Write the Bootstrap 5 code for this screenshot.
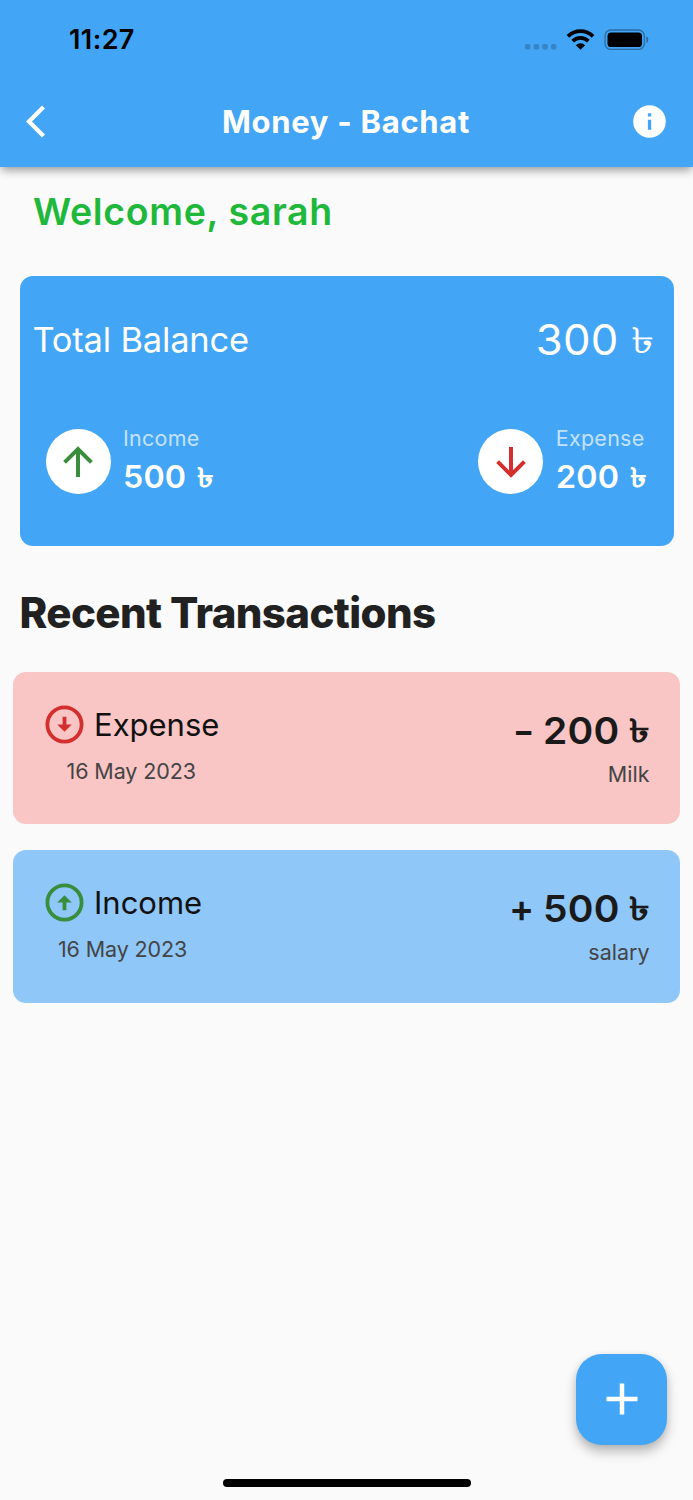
<!DOCTYPE html>
<html lang="en">
<head>
<meta charset="utf-8">
<meta name="viewport" content="width=device-width, initial-scale=1">
<title>Money - Bachat</title>
<link href="https://cdn.jsdelivr.net/npm/bootstrap@5.3.0/dist/css/bootstrap.min.css" rel="stylesheet">
<style>
:root{--sky:#42a5f5;--up:#388e3c;--down:#d32f2f}
body{background:#fafafa;font-family:Inter,"Noto Sans",sans-serif;color:#000;height:1500px;overflow:hidden}
svg{display:block;flex:none}
.app-top{background:var(--sky);height:167px;box-shadow:0 4px 9px -1px rgba(0,0,0,.4)}
.status{height:79px;padding:0 44px 0 69px}
.clock{font-size:27px;font-weight:600;line-height:42px;letter-spacing:.4px}
.toolbar{height:85px;padding:0 27px 0 25px}
.title-text{font-size:31px;font-weight:700;line-height:40px;letter-spacing:.7px;color:#fff;padding-left:13px}
.welcome{margin:20px 0 0 33px;font-size:37.5px;font-weight:600;line-height:50px;letter-spacing:.65px;color:#20b83a}
.balance{margin:38.5px 19.5px 0;height:270.5px;border-radius:13px;background:var(--sky);color:#fff;padding:39px 20px 0 13px}
.balance-label{font-size:34.5px;line-height:50px;letter-spacing:-.2px}
.balance-total{font-size:42px;line-height:50px}
.num{display:inline-block;letter-spacing:.005em;transform:scaleX(1.04);transform-origin:right;margin-right:.12em;margin-left:.06em}
.taka{display:inline-block;line-height:1;font-size:.86em;transform:translateY(-.05em) scaleX(1.3);transform-origin:right}
.stats{margin-top:64.5px;padding:0 9px 0 13px}
.disc{width:65px;height:65px;border-radius:50%;background:#fff}
.stat-text{margin-top:-7.5px;padding-left:4.5px}
.stat-label{font-size:21.5px;line-height:32px;letter-spacing:.25px;color:rgba(255,255,255,.7)}
.stat-value{font-size:31px;font-weight:600;line-height:45px}
.stat-value .num{transform-origin:left;margin-right:.17em;margin-left:0}
.stat-value .taka{transform:translateY(-.05em) scaleX(1.25);transform-origin:left}
.recent{margin:41.500px 0 0 19.5px;font-size:42px;font-weight:800;line-height:50px;letter-spacing:-.6px;color:#212121}
.entries{padding-top:34.5px}
.entry{margin:0 13px 26px;height:152.3px;border-radius:13px;padding:32px 30.500px 0 32px}
.entry-out{background:#f9c5c5}
.entry-in{background:#8fc7f8}
.entry-kind{font-size:31px;line-height:41px;letter-spacing:0;color:#111;padding-left:2px}
.entry-date,.entry-note{font-size:21.5px;color:#444}
.entry-date{line-height:30px;margin-top:11px;letter-spacing:-.1px;padding-right:2px}
.entry-amount{font-size:37.5px;font-weight:600;line-height:50px;color:#1a1a1a;padding-top:2px}
.entry-amount .taka{font-weight:700}
.minus{display:inline-block;transform:scaleX(1.25);transform-origin:right}
.entry-note{line-height:30px;margin-top:3px;letter-spacing:0}
.fab{right:26px;bottom:55.5px;width:91px;height:91px;border-radius:26px;background:var(--sky);box-shadow:0 7px 12px rgba(0,0,0,.25),0 1px 6px rgba(0,0,0,.08)}
.home-bar{left:223px;bottom:13px;width:248px;height:8px;border-radius:4px;background:#000}
</style>
</head>
<body class="position-relative">
<header class="app-top">
  <div class="status d-flex align-items-center justify-content-between">
    <span class="clock">11:27</span>
    <svg width="124" height="22" viewBox="0 0 124 22">
      <g fill="#3784c4"><rect x="0" y="15" width="5.4" height="5.4" rx="1.6"/><rect x="8.7" y="15" width="5.4" height="5.4" rx="1.6"/><rect x="17.3" y="15" width="5.4" height="5.4" rx="1.6"/><rect x="26" y="15" width="5.4" height="5.4" rx="1.6"/></g>
      <g fill="none" stroke="#000" stroke-width="3.8"><path d="M43 7.300a17.600 17.600 0 0 1 25 0"/><path d="M47.700 12.200a11 11 0 0 1 15.600 0"/></g>
      <path d="M55.500 20.800l-4.600-4.600a6.600 6.600 0 0 1 9.200 0z"/>
      <rect x="80" y="1" width="39.300" height="19.400" rx="5.800" fill="none" stroke="#2c6ca1" stroke-width="1.300"/>
      <rect x="82.500" y="3.500" width="34.500" height="14.500" rx="3.600"/>
      <path d="M121.300 7.300q2 1 2 3.400t-2 3.400z" fill="#2c6ca1"/>
    </svg>
  </div>
  <div class="toolbar d-flex align-items-center justify-content-between">
    <svg width="21" height="33" viewBox="0 0 21 33" fill="none" stroke="#fff" stroke-width="4.200"><path d="M18.500 2L4 16.500 18.500 31"/></svg>
    <span class="title-text">Money - Bachat</span>
    <svg width="33" height="33" viewBox="0 0 33 33"><circle cx="16.500" cy="16.500" r="16.300" fill="#fff"/><path d="M14.900 8.300h3.300v3.300h-3.300zM14.900 14.800h3.300v9.900h-3.300z" fill="#42a5f5"/></svg>
  </div>
</header>
<main>
  <div class="welcome">Welcome, sarah</div>
  <section class="balance">
    <div class="d-flex justify-content-between align-items-center">
      <span class="balance-label">Total Balance</span>
      <span class="balance-total"><span class="num">300</span> <span class="taka">৳</span></span>
    </div>
    <div class="stats d-flex justify-content-between">
      <div class="d-flex">
        <div class="disc d-flex align-items-center justify-content-center me-2">
          <svg width="32" height="32" viewBox="0 0 32 32" fill="none" stroke="#388e3c" stroke-width="4"><path d="M16 31V4M2.600 16.400L16 3l13.400 13.400"/></svg>
        </div>
        <div class="stat-text"><div class="stat-label">Income</div><div class="stat-value"><span class="num">500</span> <span class="taka">৳</span></div></div>
      </div>
      <div class="d-flex">
        <div class="disc d-flex align-items-center justify-content-center me-2">
          <svg width="32" height="32" viewBox="0 0 32 32" fill="none" stroke="#d32f2f" stroke-width="4"><path d="M16 1v27M2.600 15.600L16 29l13.400-13.400"/></svg>
        </div>
        <div class="stat-text"><div class="stat-label">Expense</div><div class="stat-value"><span class="num">200</span> <span class="taka">৳</span></div></div>
      </div>
    </div>
  </section>
  <h1 class="recent mb-0">Recent Transactions</h1>
  <div class="entries">
    <article class="entry entry-out d-flex justify-content-between">
      <div>
        <div class="d-flex align-items-center gap-2">
          <svg width="39" height="39" viewBox="0 0 39 39"><circle cx="19.500" cy="19.500" r="17.100" fill="none" stroke="#d32f2f" stroke-width="3.800"/><path d="M17.600 11.800h3.800v7.600h5.400l-7.300 7.300-7.300-7.300h5.400z" fill="#d32f2f"/></svg>
          <span class="entry-kind">Expense</span>
        </div>
        <div class="entry-date text-center">16 May 2023</div>
      </div>
      <div class="text-end">
        <div class="entry-amount"><span class="minus">-</span> <span class="num">200</span> <span class="taka">৳</span></div>
        <div class="entry-note">Milk</div>
      </div>
    </article>
    <article class="entry entry-in d-flex justify-content-between">
      <div>
        <div class="d-flex align-items-center gap-2">
          <svg width="39" height="39" viewBox="0 0 39 39"><circle cx="19.500" cy="19.500" r="17.100" fill="none" stroke="#388e3c" stroke-width="3.800"/><path d="M17.600 27.200h3.800v-7.600h5.400l-7.300-7.300-7.300 7.300h5.400z" fill="#388e3c"/></svg>
          <span class="entry-kind">Income</span>
        </div>
        <div class="entry-date text-center">16 May 2023</div>
      </div>
      <div class="text-end">
        <div class="entry-amount">+ <span class="num">500</span> <span class="taka">৳</span></div>
        <div class="entry-note">salary</div>
      </div>
    </article>
  </div>
</main>
<button class="fab btn border-0 p-0 position-absolute d-flex align-items-center justify-content-center" aria-label="Add">
  <svg width="32" height="32" viewBox="0 0 32 32" stroke="#fff" stroke-width="4.500"><path d="M16 .500v31M.500 16h31"/></svg>
</button>
<div class="home-bar position-absolute"></div>
<script src="https://cdn.jsdelivr.net/npm/bootstrap@5.3.0/dist/js/bootstrap.bundle.min.js"></script>
</body>
</html>
